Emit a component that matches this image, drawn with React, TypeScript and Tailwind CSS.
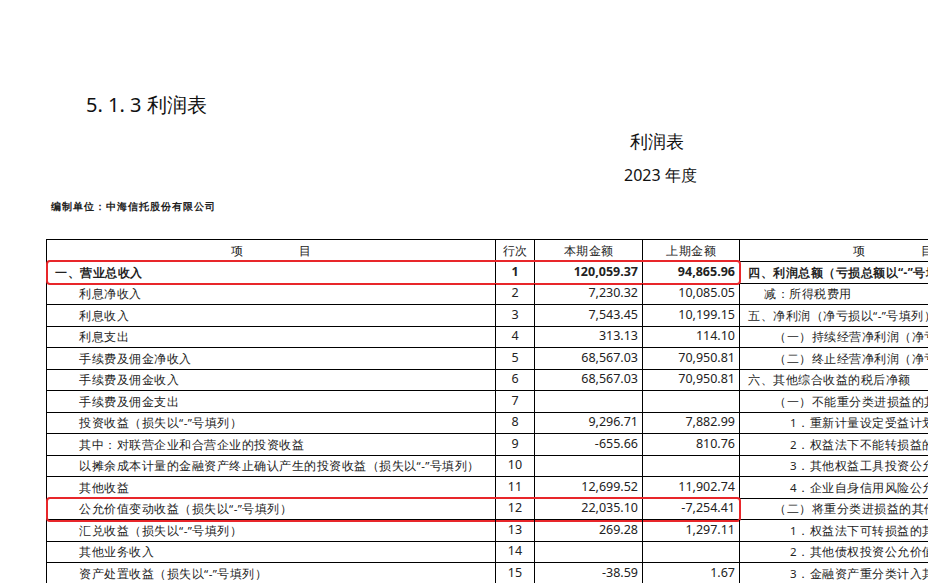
import React from "react";

type Row = { l: string; li: number; n: string; a: string; b: string; r: string; ri: number; bold?: boolean; box?: boolean };

const rows: Row[] = [
  { l: "一、营业总收入", li: 0, n: "1", a: "120,059.37", b: "94,865.96", r: "四、利润总额（亏损总额以“-”号填列）", ri: 0, bold: true, box: true },
  { l: "利息净收入", li: 1, n: "2", a: "7,230.32", b: "10,085.05", r: "减：所得税费用", ri: 1 },
  { l: "利息收入", li: 1, n: "3", a: "7,543.45", b: "10,199.15", r: "五、净利润（净亏损以“-”号填列）", ri: 0 },
  { l: "利息支出", li: 1, n: "4", a: "313.13", b: "114.10", r: "（一）持续经营净利润（净亏损以“-”号填列）", ri: 2 },
  { l: "手续费及佣金净收入", li: 1, n: "5", a: "68,567.03", b: "70,950.81", r: "（二）终止经营净利润（净亏损以“-”号填列）", ri: 2 },
  { l: "手续费及佣金收入", li: 1, n: "6", a: "68,567.03", b: "70,950.81", r: "六、其他综合收益的税后净额", ri: 0 },
  { l: "手续费及佣金支出", li: 1, n: "7", a: "", b: "", r: "（一）不能重分类进损益的其他综合收益", ri: 2 },
  { l: "投资收益（损失以“-”号填列）", li: 1, n: "8", a: "9,296.71", b: "7,882.99", r: "1．重新计量设定受益计划变动额", ri: 3 },
  { l: "其中：对联营企业和合营企业的投资收益", li: 1, n: "9", a: "-655.66", b: "810.76", r: "2．权益法下不能转损益的其他综合收益", ri: 3 },
  { l: "以摊余成本计量的金融资产终止确认产生的投资收益（损失以“-”号填列）", li: 1, n: "10", a: "", b: "", r: "3．其他权益工具投资公允价值变动", ri: 3 },
  { l: "其他收益", li: 1, n: "11", a: "12,699.52", b: "11,902.74", r: "4．企业自身信用风险公允价值变动", ri: 3 },
  { l: "公允价值变动收益（损失以“-”号填列）", li: 1, n: "12", a: "22,035.10", b: "-7,254.41", r: "（二）将重分类进损益的其他综合收益", ri: 2, box: true },
  { l: "汇兑收益（损失以“-”号填列）", li: 1, n: "13", a: "269.28", b: "1,297.11", r: "1．权益法下可转损益的其他综合收益", ri: 3 },
  { l: "其他业务收入", li: 1, n: "14", a: "", b: "", r: "2．其他债权投资公允价值变动", ri: 3 },
  { l: "资产处置收益（损失以“-”号填列）", li: 1, n: "15", a: "-38.59", b: "1.67", r: "3．金融资产重分类计入其他综合收益的金额", ri: 3 },
];

const indL = ["pl-[8px]", "pl-[32px]"];
const indR = ["pl-[8px]", "pl-[24px]", "pl-[34px]", "pl-[50px]"];
const cell = "border-r border-b border-black flex items-center";
const cjk = "font-['Noto_Sans_CJK_SC',sans-serif] tracking-[0.5px]";
const num = "font-['Liberation_Serif',serif]";
const grid = "grid grid-cols-[449px_39px_108px_97px_307px]";

export default function App() {
  return (
    <div className="w-[928px] h-[583px] overflow-hidden bg-white flex flex-col font-['Liberation_Sans','Noto_Sans_CJK_SC',sans-serif] text-[#111]">
      <div className="pl-[86px] pt-[91px] text-[20px] leading-[28px]">5. 1. 3 利润表</div>
      <div className="pl-[630px] pt-[9px] text-[18px] leading-[26px]">利润表</div>
      <div className="pl-[624px] pt-[10px] text-[16px] leading-[22px]">2023 年度</div>
      <div className="pl-[51px] pt-[13px] text-[10px] leading-[14px] font-bold tracking-[1px] text-[#222]">编制单位：中海信托股份有限公司</div>

      <div className="ml-[46px] mt-[26px] w-[1000px] border-l border-t border-black text-[11.5px] text-[#222]">
        <div className={grid + " h-[22px] " + cjk}>
          <div className={cell + " justify-center"}><span className="mr-[56px]">项</span><span>目</span></div>
          <div className={cell + " justify-center"}>行次</div>
          <div className={cell + " justify-center"}>本期金额</div>
          <div className={cell + " justify-center"}>上期金额</div>
          <div className={cell + " justify-center"}><span className="mr-[56px]">项</span><span>目</span></div>
        </div>
        {rows.map((r) => (
          <div key={r.n} className={grid + " h-[21.5px] relative" + (r.bold ? " font-bold" : "")}>
            <div className={cell + " " + cjk + " " + indL[r.li]}>{r.l}</div>
            <div className={cell + " " + num + " justify-center text-[12.5px]"}>{r.n}</div>
            <div className={cell + " " + num + " justify-end pr-[4px] text-[12.5px]"}>{r.a}</div>
            <div className={cell + " " + num + " justify-end pr-[4px] text-[12.5px]"}>{r.b}</div>
            <div className={cell + " " + cjk + " whitespace-nowrap overflow-hidden " + indR[r.ri]}>{r.r}</div>
            {r.box && <div className="absolute left-[-1px] top-[-2px] w-[695px] h-[25px] border-2 border-[#e8262a] rounded-[4px]" />}
          </div>
        ))}
      </div>
    </div>
  );
}
